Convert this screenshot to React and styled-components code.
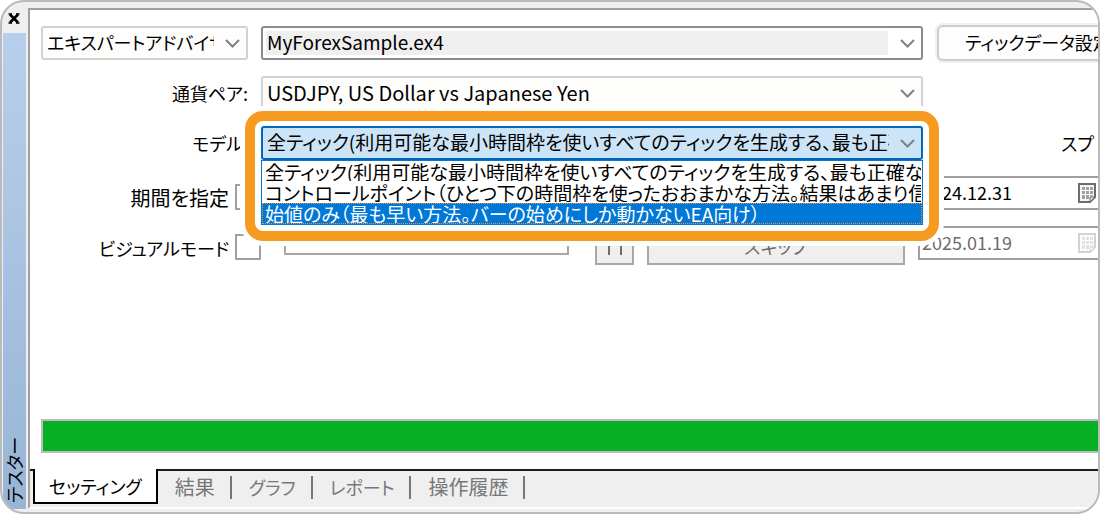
import { useState } from 'react';
import styled, { createGlobalStyle, css } from 'styled-components';

const GlobalStyle = createGlobalStyle`
  * {
    box-sizing: border-box;
  }
  body {
    margin: 0;
    background: #ffffff;
  }
  body, button, input, select {
    font-family: 'Noto Sans CJK JP', 'Liberation Sans', sans-serif;
    font-size: 19px;
    font-feature-settings: 'palt';
    color: #000000;
  }
`;

const Window = styled.div`
  display: flex;
  height: 100vh;
  overflow: hidden;
  border: 2px solid #bababa;
  border-radius: 24px;
  background: #efefef;
`;

const Dock = styled.aside`
  display: flex;
  flex-direction: column;
  flex: none;
  width: 24px;
  padding-bottom: 3px;
`;

const CloseButton = styled.button`
  display: flex;
  align-items: center;
  justify-content: center;
  height: 31px;
  padding: 2px 1px 0 0;
  border: none;
  background: transparent;
`;

const DockTitle = styled.div`
  flex: 1;
  margin-left: 1px;
  padding-top: 6px;
  background: linear-gradient(#98b5d5, #b7cfec);
  font-size: 18px;
  line-height: 23px;
  writing-mode: vertical-rl;
  text-orientation: sideways;
  transform: rotate(180deg);
`;

const Panel = styled.main`
  display: flex;
  flex-direction: column;
  flex: 1;
  min-width: 0;
  padding: 6px 0 3px 2px;
`;

const Sheet = styled.div`
  display: flex;
  flex-direction: column;
  flex: 1;
  min-height: 0;
  border-top: 2px solid #a0a0a0;
  border-left: 2px solid #a0a0a0;
  border-bottom: 2px solid #ffffff;
`;

const Form = styled.form`
  display: flex;
  flex-direction: column;
  flex: 1;
  gap: 16px;
  min-height: 0;
  padding: 16px 0 16px 11px;
  background: #ffffff;
`;

const Row = styled.div`
  display: flex;
  height: 34px;
`;

const Lead = styled.div`
  display: flex;
  flex: none;
  justify-content: flex-end;
  align-items: ${({ $low }) => ($low ? 'flex-end' : 'center')};
  gap: 6px;
  width: 207px;
  margin-right: 13px;
  ${({ $low }) =>
    $low &&
    css`
      width: 220px;
      margin-right: 0;
    `}
`;

const Label = styled.label`
  font-size: ${({ $large }) => ($large ? '20px' : '18px')};
  line-height: 24px;
  white-space: nowrap;
`;

const Tail = styled.div`
  display: flex;
  flex: none;
  align-items: center;
  justify-content: ${({ $end }) => ($end ? 'flex-end' : 'flex-start')};
  width: 161px;
  margin-left: 14px;
  padding-right: ${({ $end }) => ($end ? '4px' : '0')};
`;

const Middle = styled.div`
  position: relative;
  flex: 1;
  min-width: 0;
`;

const ComboBox = styled.div`
  display: grid;
  width: 100%;
  height: 34px;
  align-items: center;
  & > * {
    grid-area: 1 / 1;
  }
  svg {
    justify-self: end;
    margin-right: 8px;
    pointer-events: none;
  }
`;

const comboTones = {
  light: css`
    border: 2px solid #d2d2d2;
    background: #fdfdfc;
  `,
  dark: css`
    border: 2px solid #8c8c8c;
    background: linear-gradient(#efefef, #efefef) 3px 3px / calc(100% - 36px)
      calc(100% - 6px) no-repeat #ffffff;
  `,
  open: css`
    border: 2px solid #0067c0;
    background: #cce4f7;
  `,
};

const comboSizes = {
  small: '18px',
  medium: '19px',
  large: '20px',
};

const Select = styled.select`
  width: 100%;
  height: 34px;
  min-width: 0;
  padding: 0 32px 3px 4px;
  border-radius: 3px;
  outline: none;
  appearance: none;
  font-size: ${({ $size }) => comboSizes[$size]};
  ${({ $tone }) => comboTones[$tone]}
`;

const Highlight = styled.div`
  position: absolute;
  top: -15px;
  left: -16px;
  right: -16px;
  z-index: 2;
  padding: 5px 6px 6px;
  border: 10px solid #f59b22;
  border-radius: 18px;
  background: #ffffff;
  box-shadow: 0 0 0 5px #ffffff;
`;

const OptionList = styled.ul`
  margin: 0;
  padding: 0;
  border: 1px solid #0078d7;
  list-style: none;
  background: #ffffff;
`;

const Option = styled.li`
  padding-left: 2px;
  overflow: hidden;
  border: 1px solid transparent;
  line-height: 19px;
  white-space: nowrap;
  ${({ $active }) =>
    $active &&
    css`
      border: 1px dotted #f0923a;
      background: #0078d7;
      color: #ffffff;
    `}
`;

const SettingButton = styled.button`
  flex: none;
  width: 190px;
  height: 36px;
  padding: 0 0 3px 26px;
  border: 2px solid #cccccc;
  border-radius: 6px;
  background: #fdfdfd;
  box-shadow: 0 0 0 2px #f0f0f0;
  font-size: 18px;
  text-align: left;
  white-space: nowrap;
`;

const CheckBox = styled.input`
  width: 26px;
  height: 26px;
  margin: 0;
  border: 2px solid #a0a0a0;
  background: #ffffff;
  appearance: none;
`;

const DateField = styled.div`
  display: flex;
  align-items: center;
  flex: none;
  width: 180px;
  height: 34px;
  border: 2px solid #a0a0a0;
  border-right: none;
  background: #ffffff;
  input {
    flex: 1;
    min-width: 0;
    padding: 0 0 2px 2px;
    border: none;
    background: transparent;
    font-size: 18px;
  }
  input:disabled {
    color: #6d6d6d;
  }
  svg {
    flex: none;
    margin-right: 1px;
  }
`;

const Playback = styled.div`
  display: flex;
  flex: 1;
  gap: 13px;
  padding: 0 13px 0 23px;
`;

const SpeedSlider = styled.input`
  flex: 1;
  min-width: 0;
  height: 29px;
  margin: 0 13px 0 0;
  border: 2px solid #a8a8a8;
  background: #ffffff;
  appearance: none;
  &::-webkit-slider-thumb {
    width: 10px;
    height: 8px;
    appearance: none;
    background: #c8c8c8;
  }
`;

const FlatButton = styled.button`
  width: ${({ $wide }) => ($wide ? '258px' : '39px')};
  height: 39px;
  padding: 0;
  border: 2px solid #a8a8a8;
  background: #efefef;
  color: #6d6d6d;
  font-size: 18px;
  svg {
    display: block;
    margin: 0 auto;
  }
`;

const Progress = styled.div`
  height: 34px;
  margin-top: auto;
  border: 2px solid #bcbcbc;
  border-right: none;
  background: #06b025;
`;

const TabBar = styled.nav`
  display: flex;
  height: 38px;
  border-top: 2px solid #1c1c1c;
  background: #efefef;
`;

const Tab = styled.button`
  position: relative;
  height: 32px;
  padding: 0 17px;
  border: none;
  background: transparent;
  color: #777777;
  font-size: ${({ $large }) => ($large ? '20px' : '18px')};
  line-height: 30px;
  white-space: nowrap;
  ${({ $active }) =>
    $active
      ? css`
          height: 35px;
          margin: -2px 0 0 3px;
          padding: 0 14px;
          border: 2px solid #000000;
          border-top: none;
          background: #ffffff;
          color: #000000;
        `
      : css`
          &::after {
            content: '';
            position: absolute;
            top: 5px;
            right: 0;
            width: 2px;
            height: 23px;
            background: #777777;
          }
        `}
`;

const Chevron = () => (
  <svg width="15" height="10" viewBox="0 0 15 10" fill="none" aria-hidden="true">
    <path d="M1 2 L7.5 8.500 L14 2" stroke="#808080" strokeWidth="2" />
  </svg>
);

const CalendarIcon = ({ faded }) => (
  <svg width="20" height="22" viewBox="0 0 20 22" opacity={faded ? 0.3 : 1} aria-hidden="true">
    <path d="M2 2h16v13l-5 5H2z" fill="#f6f6f6" stroke="#75686a" strokeWidth="2" />
    <path d="M5 5h11v9h-3v3H5z" fill="#98a2aa" />
    <path d="M5 8.500h11M5 12.500h11M8.500 5v12M12.500 5v12" stroke="#ffffff" />
    <path d="M13 20v-5h5z" fill="#cfe3f2" stroke="#75686a" />
  </svg>
);

const PauseIcon = () => (
  <svg width="16" height="18" viewBox="0 0 16 18" aria-hidden="true">
    <path d="M2 0v18M14 0v18" stroke="#6d6d6d" strokeWidth="2" />
  </svg>
);

const Combo = ({ id, tone, size = 'medium', value, label }) => (
  <ComboBox>
    <Select id={id} $tone={tone} $size={size} aria-label={label} defaultValue={value}>
      <option value={value}>{value}</option>
    </Select>
    <Chevron />
  </ComboBox>
);

const models = [
  '全ティック(利用可能な最小時間枠を使いすべてのティックを生成する、最も正確な',
  'コントロールポイント（ひとつ下の時間枠を使ったおおまかな方法。結果はあまり信頼',
  '始値のみ（最も早い方法。バーの始めにしか動かないEA向け）',
];

const tabs = [
  { name: 'セッティング' },
  { name: '結果', large: true },
  { name: 'グラフ' },
  { name: 'レポート' },
  { name: '操作履歴', large: true },
];

export default function App() {
  const [tab, setTab] = useState('セッティング');
  const [hovered, setHovered] = useState(2);

  return (
    <>
      <GlobalStyle />
      <Window>
        <Dock>
          <CloseButton type="button" aria-label="閉じる">
            <svg width="12" height="11" viewBox="0 0 12 11">
              <path d="M2 1.500L10 9.500M10 1.500L2 9.500" stroke="#000" strokeWidth="2.600" />
              <path d="M0.500 1h3.500M8 1h3.500M0.500 10h3.500M8 10h3.500" stroke="#000" strokeWidth="1.500" />
            </svg>
          </CloseButton>
          <DockTitle>テスター</DockTitle>
        </Dock>
        <Panel>
          <Sheet>
            <Form>
              <Row>
                <Lead>
                  <Combo tone="light" size="small" label="種類" value="エキスパートアドバイザ" />
                </Lead>
                <Middle>
                  <Combo tone="dark" label="ファイル" value="MyForexSample.ex4" />
                </Middle>
                <Tail>
                  <SettingButton type="button">ティックデータ設定</SettingButton>
                </Tail>
              </Row>
              <Row>
                <Lead>
                  <Label htmlFor="symbol">通貨ペア:</Label>
                </Lead>
                <Middle>
                  <Combo
                    id="symbol"
                    tone="light"
                    size="large"
                    value="USDJPY, US Dollar vs Japanese Yen"
                  />
                </Middle>
                <Tail />
              </Row>
              <Row>
                <Lead>
                  <Label htmlFor="model">モデル:</Label>
                </Lead>
                <Middle>
                  <Highlight>
                    <Combo id="model" tone="open" value={models[0]} />
                    <OptionList role="listbox" aria-label="モデル">
                      {models.map((model, i) => (
                        <Option
                          key={model}
                          role="option"
                          aria-selected={i === hovered}
                          $active={i === hovered}
                          onMouseEnter={() => setHovered(i)}
                        >
                          {model}
                        </Option>
                      ))}
                    </OptionList>
                  </Highlight>
                </Middle>
                <Tail $end>
                  <Label as="span">スプ</Label>
                </Tail>
              </Row>
              <Row>
                <Lead $low>
                  <Label htmlFor="period" $large>
                    期間を指定
                  </Label>
                  <CheckBox id="period" type="checkbox" />
                </Lead>
                <Middle />
                <DateField>
                  <input aria-label="開始日" defaultValue="2024.12.31" />
                  <CalendarIcon />
                </DateField>
              </Row>
              <Row>
                <Lead $low>
                  <Label htmlFor="visual">ビジュアルモード</Label>
                  <CheckBox id="visual" type="checkbox" />
                </Lead>
                <Playback>
                  <SpeedSlider type="range" aria-label="速度" disabled />
                  <FlatButton type="button" aria-label="一時停止" disabled>
                    <PauseIcon />
                  </FlatButton>
                  <FlatButton type="button" $wide disabled>
                    スキップ
                  </FlatButton>
                </Playback>
                <DateField>
                  <input aria-label="スキップ先" defaultValue="2025.01.19" disabled />
                  <CalendarIcon faded />
                </DateField>
              </Row>
              <Progress role="progressbar" aria-label="進捗" aria-valuenow={100} />
            </Form>
            <TabBar>
              {tabs.map(({ name, large }) => (
                <Tab
                  key={name}
                  type="button"
                  $active={name === tab}
                  $large={large}
                  onClick={() => setTab(name)}
                >
                  {name}
                </Tab>
              ))}
            </TabBar>
          </Sheet>
        </Panel>
      </Window>
    </>
  );
}
